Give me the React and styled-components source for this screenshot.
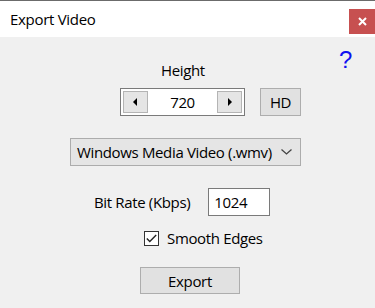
import React from "react";
import styled, { createGlobalStyle } from "styled-components";

const GlobalStyle = createGlobalStyle`
  html, body {
    margin: 0;
    padding: 0;
    background: #f0f0f0;
  }
  body {
    font-family: "Open Sans", "Noto Sans", sans-serif;
    color: #000;
  }
`;

const Window = styled.div`
  width: 375px;
  height: 308px;
  background: #f0f0f0;
  border-top: 1px solid #6b6b6b;
  box-sizing: border-box;
  overflow: hidden;
`;

const TitleBar = styled.div`
  height: 36px;
  background: #fff;
  display: flex;
  align-items: center;
  justify-content: space-between;
  padding-left: 10px;
  font-size: 15px;
  letter-spacing: -0.3px;
`;

const CloseButton = styled.div`
  width: 26px;
  height: 25px;
  align-self: flex-start;
  margin-top: 8px;
  background: #c75050;
  display: flex;
  align-items: center;
  justify-content: center;
`;

const Body = styled.div`
  position: relative;
  display: flex;
  flex-direction: column;
  font-size: 15px;
  letter-spacing: -0.35px;
`;

const Help = styled.div`
  position: absolute;
  top: 9px;
  left: 339px;
  font-family: "Liberation Sans", Arial, sans-serif;
  font-size: 24px;
  letter-spacing: 0;
  color: #1010f0;
`;

const Row = styled.div`
  display: flex;
  align-items: center;
  padding-left: ${(p) => p.$left}px;
  margin-top: ${(p) => p.$top}px;
  gap: ${(p) => p.$gap || 0}px;
  height: ${(p) => p.$height || 20}px;
`;

const Label = styled.span`
  line-height: 20px;
`;

const Spinner = styled.div`
  width: 125px;
  height: 28px;
  box-sizing: border-box;
  border: 1px solid #7a7a7a;
  background: #fff;
  display: flex;
  align-items: center;
  justify-content: space-between;
  padding: 0 2px;
`;

const SpinButton = styled.div`
  width: 25px;
  height: 22px;
  box-sizing: border-box;
  background: #e5e5e5;
  border: 1px solid #b4b4b4;
  display: flex;
  align-items: center;
  justify-content: center;
`;

const SpinValue = styled.span`
  flex: 1;
  text-align: center;
`;

const Button = styled.div`
  width: ${(p) => p.$width}px;
  height: ${(p) => p.$height || 27}px;
  box-sizing: border-box;
  background: #e1e1e1;
  border: 1px solid #adadad;
  display: flex;
  align-items: center;
  justify-content: center;
`;

const Select = styled.div`
  width: 231px;
  height: 28px;
  box-sizing: border-box;
  background: #e5e5e5;
  border: 1px solid #acacac;
  display: flex;
  align-items: center;
  justify-content: space-between;
  padding: 0 8px 0 6px;
`;

const TextBox = styled.div`
  width: 62px;
  height: 28px;
  box-sizing: border-box;
  background: #fff;
  border: 1px solid #7a7a7a;
  display: flex;
  align-items: center;
  padding-left: 5px;
`;

const CheckBox = styled.div`
  width: 15px;
  height: 15px;
  box-sizing: border-box;
  background: #fff;
  border: 1px solid #333;
  display: flex;
  align-items: center;
  justify-content: center;
`;

const Arrow = ({ dir }) => (
  <svg width="5" height="8" viewBox="0 0 5 8">
    {dir === "left" ? (
      <polygon points="4,0 4,8 0,4" fill="#000" />
    ) : (
      <polygon points="1,0 1,8 5,4" fill="#000" />
    )}
  </svg>
);

const App = () => {
  return (
    <Window>
      <GlobalStyle />
      <TitleBar>
        <span>Export Video</span>
        <CloseButton>
          <svg width="9" height="9" viewBox="0 0 9 9">
            <path d="M1 1 L8 8 M8 1 L1 8" stroke="#fff" strokeWidth="2" />
          </svg>
        </CloseButton>
      </TitleBar>
      <Body>
        <Help>?</Help>
        <Row $left={161} $top={23}>
          <Label>Height</Label>
        </Row>
        <Row $left={120} $top={8} $gap={15} $height={28}>
          <Spinner>
            <SpinButton>
              <Arrow dir="left" />
            </SpinButton>
            <SpinValue>720</SpinValue>
            <SpinButton>
              <Arrow dir="right" />
            </SpinButton>
          </Spinner>
          <Button $width={41} $height={28}>HD</Button>
        </Row>
        <Row $left={70} $top={22} $height={28}>
          <Select>
            <span>Windows Media Video (.wmv)</span>
            <svg width="11" height="6" viewBox="0 0 11 6">
              <polyline points="0.5,0.5 5.5,5 10.5,0.5" fill="none" stroke="#444" strokeWidth="1.3" />
            </svg>
          </Select>
        </Row>
        <Row $left={94} $top={22} $gap={18} $height={28}>
          <Label>Bit Rate (Kbps)</Label>
          <TextBox>1024</TextBox>
        </Row>
        <Row $left={144} $top={12} $gap={8}>
          <CheckBox>
            <svg width="11" height="9" viewBox="0 0 11 9">
              <polyline points="0.8,4.5 3.8,7.5 10.2,1" fill="none" stroke="#222" strokeWidth="1.4" />
            </svg>
          </CheckBox>
          <Label>Smooth Edges</Label>
        </Row>
        <Row $left={140} $top={19} $height={27}>
          <Button $width={100}>Export</Button>
        </Row>
      </Body>
    </Window>
  );
};

export default App;
